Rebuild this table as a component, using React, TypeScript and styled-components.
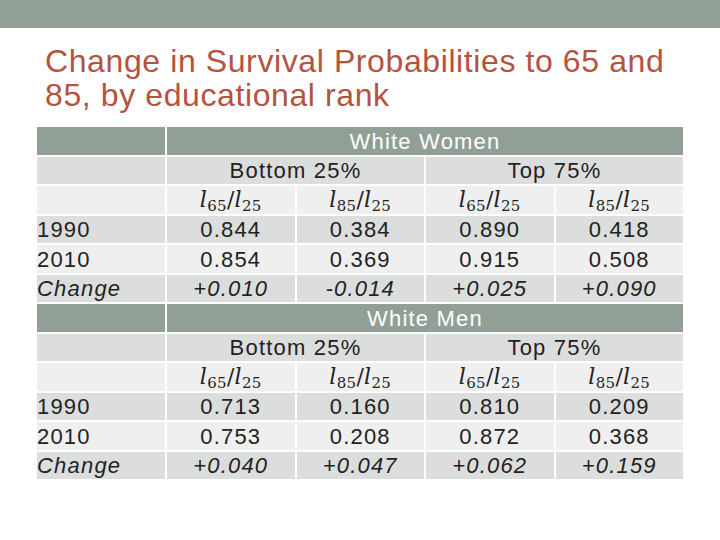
import React from 'react';
import styled, { createGlobalStyle } from 'styled-components';

const GlobalStyle = createGlobalStyle`
  html, body {
    margin: 0;
    padding: 0;
    background: #ffffff;
  }
`;

const Slide = styled.div`
  width: 720px;
  height: 540px;
  background: #ffffff;
  font-family: "Liberation Sans", Arial, sans-serif;
  overflow: hidden;
`;

const TopBar = styled.div`
  height: 28px;
  background: #929f97;
`;

const Title = styled.h1`
  margin: 16px 0 0 45px;
  font-family: "Liberation Sans", Arial, sans-serif;
  font-weight: normal;
  font-size: 32px;
  line-height: 34px;
  letter-spacing: 0.6px;
  color: #b4533f;
`;

const Table = styled.div`
  margin: 15px 0 0 37px;
  width: 646px;
  display: grid;
  grid-template-columns: 128px repeat(4, 1fr);
  grid-auto-rows: 27.5px;
  column-gap: 2px;
  row-gap: 2px;
`;

type Tone = 'head' | 'dark' | 'light';

const tones: Record<Tone, string> = {
  head: '#929f97',
  dark: '#dcdedd',
  light: '#eeefee',
};

const Cell = styled.div<{ $tone: Tone; $span?: number; $left?: boolean; $italic?: boolean }>`
  grid-column: span ${p => p.$span ?? 1};
  background: ${p => tones[p.$tone]};
  color: ${p => (p.$tone === 'head' ? '#ffffff' : '#222222')};
  display: flex;
  align-items: flex-end;
  justify-content: ${p => (p.$left ? 'flex-start' : 'center')};
  font-size: 22px;
  line-height: normal;
  letter-spacing: 1.2px;
  font-style: ${p => (p.$italic ? 'italic' : 'normal')};
  white-space: nowrap;
  overflow: hidden;
`;

const Formula = styled.span`
  font-family: "DejaVu Serif", "Liberation Serif", serif;
  font-size: 22px;
  letter-spacing: 0.3px;
  padding-bottom: 2px;
  color: #222222;
`;

const Ell = styled.i`
  font-style: italic;
`;

const Sub = styled.sub`
  font-size: 15px;
  vertical-align: -4px;
  line-height: 0;
`;

const Ratio: React.FC<{ age: string }> = ({ age }) => (
  <Formula>
    <Ell>l</Ell>
    <Sub>{age}</Sub>/<Ell>l</Ell>
    <Sub>25</Sub>
  </Formula>
);

type Block = {
  group: string;
  rows: { label: string; values: string[]; italic?: boolean }[];
};

const blocks: Block[] = [
  {
    group: 'White Women',
    rows: [
      { label: '1990', values: ['0.844', '0.384', '0.890', '0.418'] },
      { label: '2010', values: ['0.854', '0.369', '0.915', '0.508'] },
      { label: 'Change', values: ['+0.010', '-0.014', '+0.025', '+0.090'], italic: true },
    ],
  },
  {
    group: 'White Men',
    rows: [
      { label: '1990', values: ['0.713', '0.160', '0.810', '0.209'] },
      { label: '2010', values: ['0.753', '0.208', '0.872', '0.368'] },
      { label: 'Change', values: ['+0.040', '+0.047', '+0.062', '+0.159'], italic: true },
    ],
  },
];

const App: React.FC = () => {
  return (
    <Slide>
      <GlobalStyle />
      <TopBar />
      <Title>
        Change in Survival Probabilities to 65 and
        <br />
        85, by educational rank
      </Title>
      <Table>
        {blocks.map(block => (
          <React.Fragment key={block.group}>
            <Cell $tone="head" />
            <Cell $tone="head" $span={4}>{block.group}</Cell>

            <Cell $tone="dark" />
            <Cell $tone="dark" $span={2}>Bottom 25%</Cell>
            <Cell $tone="dark" $span={2}>Top 75%</Cell>

            <Cell $tone="light" />
            <Cell $tone="light"><Ratio age="65" /></Cell>
            <Cell $tone="light"><Ratio age="85" /></Cell>
            <Cell $tone="light"><Ratio age="65" /></Cell>
            <Cell $tone="light"><Ratio age="85" /></Cell>

            {block.rows.map((row, i) => {
              const tone: Tone = i % 2 === 0 ? 'dark' : 'light';
              return (
                <React.Fragment key={row.label}>
                  <Cell $tone={tone} $left $italic={row.italic}>{row.label}</Cell>
                  {row.values.map((v, j) => (
                    <Cell key={j} $tone={tone} $italic={row.italic}>{v}</Cell>
                  ))}
                </React.Fragment>
              );
            })}
          </React.Fragment>
        ))}
      </Table>
    </Slide>
  );
};

export default App;
